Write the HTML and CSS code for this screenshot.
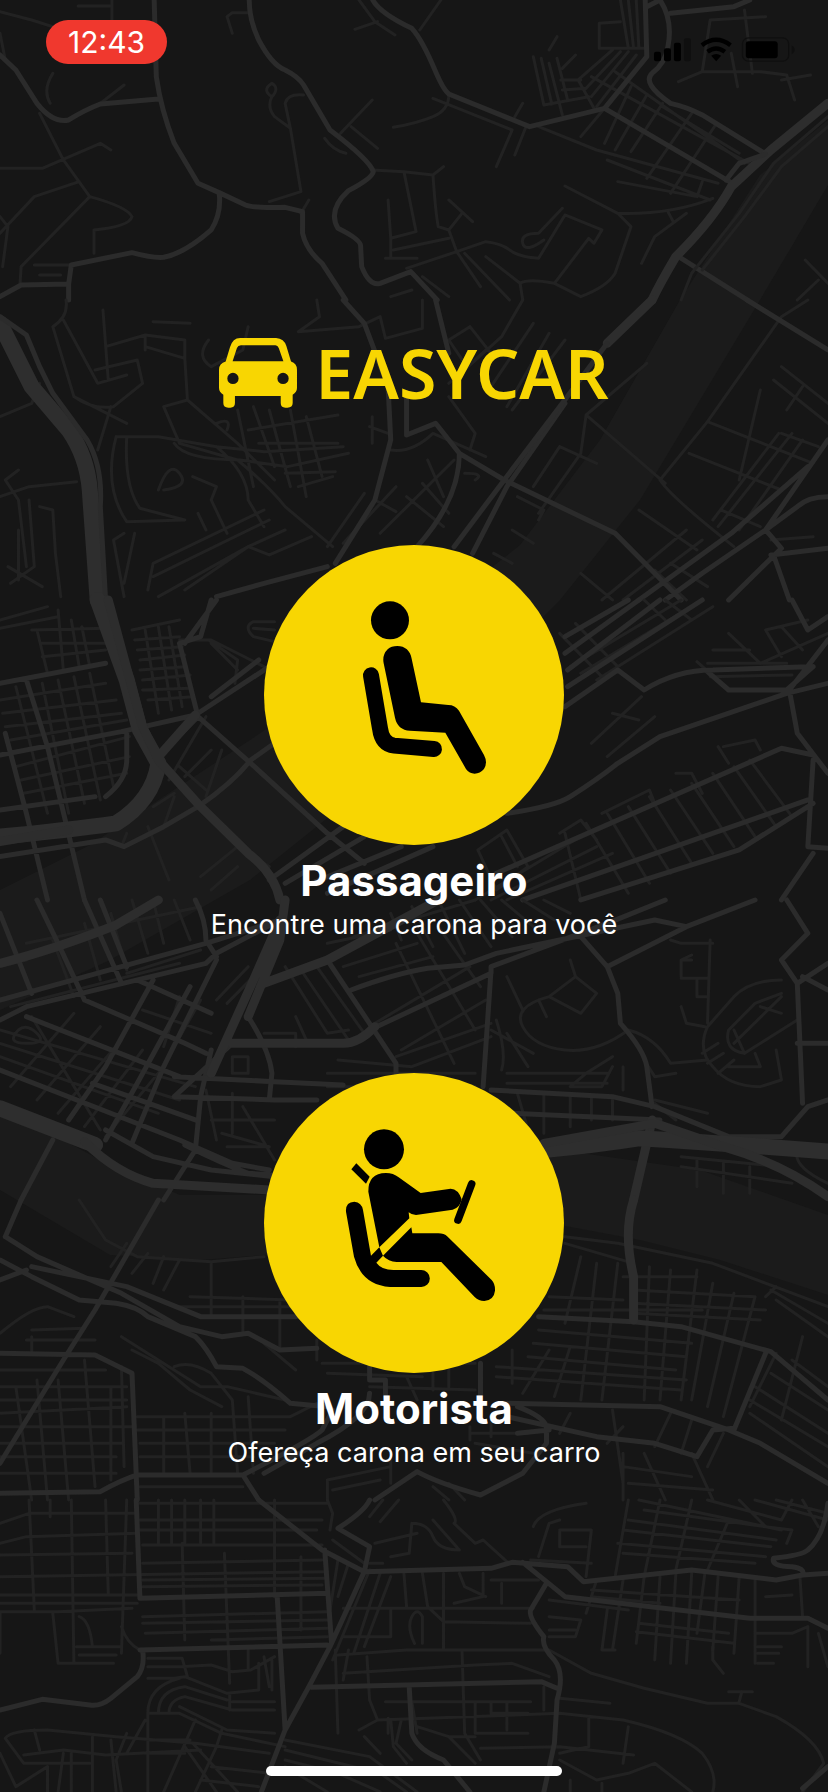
FILE: index.html
```html
<!DOCTYPE html>
<html lang="pt-BR">
<head>
<meta charset="utf-8">
<meta name="viewport" content="width=device-width, initial-scale=1">
<title>EasyCar</title>
<link rel="stylesheet" href="styles.css">
</head>
<body>
<div class="screen">
  <svg class="map" viewBox="0 0 828 1792" preserveAspectRatio="xMidYMid slice" aria-hidden="true">
    <!-- river -->
    <path class="water" d="M828 120V185L760 300 700 400 640 500 560 600 480 680 400 760 250 880 110 960 0 1010V890L90 845 250 740 400 640 520 545 600 440 680 300 760 175ZM0 1105L100 1160 180 1195 280 1195 420 1180 560 1150 700 1170 828 1215V1295L720 1260 640 1240 560 1225 460 1235 330 1250 200 1260 110 1255 0 1190Z"/>

    <!-- y 0 to 300 -->
    <g transform="scale(.528 .3333)">
      <path class="street" d="M212 0V60M148 18H210M440 100L430 50 440 38H470M0 35L60 60 110 85M0 100L10 180M100 220Q80 270 95 310M75 340L120 480 170 590 40 800 38 850M235 255L190 310M0 505H80L190 430 210 450M150 545L65 590 0 700M170 590Q240 620 250 650 245 680 178 690V760M0 650L15 680 5 800M65 795H135M75 825H115M550 385L520 350Q505 320 515 290 495 270 515 250 530 265 515 290M550 385L540 310Q545 280 575 285M550 385L570 575 510 605M585 600L570 640M705 300L645 400M665 380L715 445M615 415Q630 450 655 460M835 0L795 90M680 0L710 65 748 105M672 88L715 65M850 285Q850 330 820 350 790 370 745 382M820 295L970 390M970 390L940 500M995 385L975 465M990 310L975 350M705 510L765 515 820 525 840 500M765 515L788 695 740 715 735 600M820 525Q825 640 830 680L850 690 875 640M850 600L895 665M740 715V770M850 690L865 755 770 805M730 775H790M745 750L850 715M865 755L920 725Q950 730 965 750T1020 775L1070 645 1140 690 1125 730 1115 715 1050 850 1100 890Q1150 860 1165 820L1195 680 1170 640 1070 558M1170 640Q1270 645 1350 595M1065 625L1020 700Q985 700 990 730T1030 720M920 770L985 850 990 900M985 850Q1000 835 1050 850M880 760L965 900M865 755L910 860M800 830L850 890M740 890L780 870"/>
      <path class="street" d="M1010 170L1030 315M1025 175L1045 312M1040 190L1065 345M1055 175L1075 300M1055 110L1040 150M1030 315L1115 290M1065 270L1110 265M1062 240L1100 240M1090 165L1065 205M1175 0L1190 145M1190 0L1200 145M1205 0L1210 145M1175 65L1135 70V145H1225M1160 150L1095 240 1125 325M1175 155L1110 265M1190 155L1120 290M1205 165L1130 320M1120 230L1430 500M1165 215L1410 490M1255 320L1400 460M1100 410L1145 325M1145 430L1195 260M1165 450L1225 285M1195 455L1255 310M1225 535L1310 340M1270 580L1355 375M1020 380L1130 450 1360 550M1150 480L1345 600M1170 545L1320 590 1330 545M1345 60L1330 215 1285 245M1345 60L1450 50M1410 30L1425 220M1330 215H1440L1490 225 1505 300M1385 160L1397 260M1480 240L1535 225M1300 640L1240 710 1215 790M1265 635L1275 665M1525 780L1568 850M1550 840L1510 900"/>
      <path class="road" d="M292 0L296 230Q305 330 330 430L375 550 415 578 465 615Q480 625 540 622L573 635V700Q580 750 610 790L655 900M415 578Q420 640 400 690 350 760 310 772 290 775 250 758L135 795 130 852 40 855 0 890M130 852V900M472 0Q472 60 490 120 515 195 540 210 565 230 575 255L625 390Q700 480 707 515 705 535 660 572 620 630 640 685 685 720 683 740L685 800Q700 860 720 850L778 815 828 900M706 0Q720 40 780 85 800 120 825 215 840 270 850 282L1003 380 1145 325 1225 170 1222 0M1145 325L1385 548M1250 0Q1275 60 1265 140 1260 190 1235 220 1215 250 1270 310 1300 320 1330 345L1450 462M1225 20L1250 0M1270 40L1390 20 1420 0M0 165L30 210 70 310Q100 370 130 360 160 330 190 312L300 297M1280 765L1415 900"/>
      <path class="highway" d="M1568 310L1460 450 1385 560Q1350 660 1280 770 1250 850 1235 900"/>
      <path class="street" d="M1568 350L1465 490 1400 640 1310 820 1290 900M1568 380L1480 500 1410 650 1330 810"/>
      <path class="road" d="M1450 462L1400 490 1375 540"/>
    </g>

    <!-- y 300 to 600 -->
    <g transform="translate(0 300) scale(.528 .3333)">
      <path class="street" d="M125 0Q130 50 100 80L140 290M120 60L185 250 240 225M180 210L260 180 270 250 215 320Q175 330 140 290M195 30L205 240M200 140L275 105 350 120V175L275 140M275 105V150M290 65L360 70M350 175L355 300 310 320 340 430 450 480M355 300L450 430 520 540M210 320L185 450M140 290L240 370M220 410H300L410 440 500 455 650 440M240 410Q235 560 265 625L350 660M220 410Q195 560 240 665L350 660M330 430Q350 480 455 480L545 500 660 460M410 440Q470 520 470 600L500 680M450 480Q510 560 540 620L630 740M410 370Q440 350 430 390M450 330L480 560M480 320L520 500M510 330L550 560M550 330L580 590M580 350L610 530M470 390L640 345M490 430L640 430M540 520L635 515M565 560L630 530M300 570Q320 480 340 520T310 570M365 530L410 560 400 600 430 700M375 640L390 690M280 870L290 790 500 630M290 830L510 660M300 890L470 740M350 870L470 740 540 690M470 740L510 765 590 710M0 350L60 310 75 250M0 590L55 560 145 545M35 510L10 540 35 600 50 800M35 690V840M55 600L65 800 20 850M75 620L100 630 105 760 115 890M15 800L80 860M235 700L215 720 235 890M255 700L235 850M600 0L605 50 565 95 680 80 720 50 730 115 800 85V0M395 120Q370 170 400 200L460 150 470 80M890 80L850 120 880 190M890 80L930 160M990 0L950 110 880 210M850 250L920 150M1040 100L960 320M1010 70L930 260M1070 120L970 330M700 380L735 400M705 350V430M740 450Q780 460 820 400L920 470M850 290L900 400 890 450M810 480L840 590M860 480L720 700M880 520Q920 520 900 540M770 590L840 680M800 550L850 640M690 580L620 740M750 560L650 730M710 600L750 635"/>
      <path class="street" d="M1225 190L1110 345 1100 460 1020 640M1110 345L1260 550M1060 440L1130 490M1060 440L1010 560M980 590L1030 630 1020 660M970 690L1010 730M935 760L970 790M1340 365L1540 490M1305 460L1480 570M1250 540L1340 365 1480 50 1530 0M1250 540Q1270 590 1390 740M1210 630L1320 750M1480 200L1568 310M1465 240L1568 370M1520 260L1490 330M1440 270L1400 540M1475 400L1350 660M1500 400L1360 680M1520 420L1400 690M1480 400L1550 440M1365 630L1440 680M1100 820L1160 900M1140 900L1300 690M1180 900L1330 720M1240 810L1300 900M1270 790L1340 860M1460 720L1540 710"/>
      <path class="road" d="M650 0L690 70 735 260 740 420 710 600 635 790M825 0L850 160M770 290L770 405 825 370 870 460 955 540 1165 700 1290 900M870 460Q870 600 790 740M1070 310L960 560 895 760M410 890L500 850 620 800M1415 0L1568 150M1568 420L1450 690 1330 820 1260 900M1530 500L1385 700 1210 900M1568 590Q1530 590 1510 620L1450 690 1480 745 1380 900M1460 765L1568 745M1465 765L1495 900"/>
      <path class="highway" d="M1235 0L1150 130"/>
      <path class="road" d="M1150 130L1060 320 955 540 860 740"/>
      <path class="trunk" d="M0 70L60 260 130 390Q165 470 170 570L185 900"/>
      <path class="road" d="M0 50L50 105 75 200 100 280 165 420Q195 500 190 620L200 900"/>
    </g>

    <!-- y 600 to 900 -->
    <g transform="translate(0 600) scale(.528 .3333)">
      <path class="street" d="M0 60L90 20M0 85L110 50M60 90L200 85M80 130H200M80 170L200 150M110 30L120 210M135 60L150 200M155 80L170 200M70 90L90 220M250 90L340 60M255 120L340 110M260 150L345 140M265 180L350 165M265 210L350 200M270 240L360 225M270 270L360 265M280 300L365 290M275 90L300 340M300 80L325 330M320 80L345 320M0 300L200 250M5 340L220 300M10 380L230 340M20 420L240 360M30 500L245 410M40 540L245 470M45 580L240 520M80 250L130 640M110 240L160 610M140 230L190 600M170 220L215 560M30 260L90 640M340 120L400 120 500 200M395 120L450 180 445 250M400 130L450 210M520 65H480Q460 80 480 110L520 125M520 90L480 85M390 350L320 540M400 450L350 530M420 450L390 590M390 570L340 500M280 680L320 840M380 830L450 740 510 800M400 870L450 800M240 700L230 740M310 680L330 590M290 620L330 580M900 900L1110 700M930 900L1130 740M960 900L1160 760M1070 700L1100 900M1110 670L1190 880M1150 640L1230 850M1190 620L1270 820M1230 590L1310 790M1270 570L1350 760M1310 550L1390 740M1350 520L1430 710M1390 500L1470 680M1420 480L1500 650M1140 640L1230 570 1240 610M1060 700L1100 660 1130 720M905 750L960 690 1000 800 940 870ZM950 710L980 800M1280 520H1310L1330 580M1370 440L1430 420 1440 450M1360 440L1380 490M1215 290L1120 430M1240 350L1150 470M1160 340L1210 360M1380 100L1440 190M1350 150H1420M1450 90L1480 170M1450 90L1530 60M1480 80L1520 150M1440 190L1568 100M1320 185L1380 270M1340 190L1490 190M1345 230L1500 225M1320 10L1100 220M1290 0L1080 200M1350 20L1130 240M1060 100L1140 230M1090 70L1170 200M1220 0L1260 60M1260 0L1310 60"/>
      <path class="road" d="M0 250L200 190M0 465L230 395 370 345 510 200M0 770L200 720 235 740 310 680 375 620Q440 550 475 480L555 390M0 630L180 590M50 240L90 440 160 900M10 400L50 640 90 900M240 400V480Q240 540 200 590M400 0L380 110 340 130 375 350M410 0L350 130M375 350L475 490 620 700 690 790M375 350L300 470M490 180L400 290M1190 0L1070 110M1330 0L1075 260M1210 0L1070 160M1250 0L1075 210M1070 320L1170 210 1220 270Q1280 210 1350 210L1530 200M1340 215L1380 270H1490L1540 200M960 640Q1050 620 1080 590 1130 540 1170 490L1250 410 1490 280 1568 250M940 820L1480 445 1540 465M990 900L1530 600M1500 0L1530 90 1568 50M1568 120L1495 270 1510 400 1568 520M1540 480L1530 740 1568 745M1540 760L1480 900M1100 900L1400 750 1540 610M510 840L650 680M540 850L690 710M590 850L760 740M620 880L820 740"/>
      <path class="trunk" d="M185 0L240 240 265 390 300 490Q290 600 220 670 130 690 0 710"/>
      <path class="highway" d="M205 0L270 380 300 480 380 620 470 760Q520 820 530 900M300 470L370 345M0 725L130 690"/>
    </g>

    <!-- y 900 to 1200 -->
    <g transform="translate(0 900) scale(.528 .3333)">
      <path class="street" d="M100 120L140 290M160 70L190 240M210 40L240 210M250 0L280 160M290 0L310 130M330 0L360 120M50 130L380 20M0 200L50 180M20 320L340 190M240 220L380 150M0 390L370 560M0 430L340 600M0 470L300 640M60 350L190 690M20 560L140 340M70 600L190 380M110 640L230 420M160 680L270 450M200 710L310 500M270 330L400 400M340 290L310 440M380 300L330 440M35 390Q50 370 70 400T50 430 35 390M410 300L470 200M430 310L480 230M440 470H470V520H440ZM500 400H560V440M540 200L620 400 660 390M570 210L660 420M600 200L690 400M560 350L580 420M640 480L780 500M620 520H900M620 560H900M400 660H520M420 700L510 740M430 740H510M460 620L520 780M390 570L410 720M440 580V700M750 130L860 490M790 100L900 390M830 80L910 260M650 200L790 130M680 230L820 170M710 370L890 200M760 450L920 300M740 40L760 120M780 20L820 140M830 0L880 160M870 0L930 140M910 0L970 110M950 0L1010 80M990 0L1050 60M1030 0L1080 40M670 110L900 0M620 130L740 90M750 470L930 370M780 500L930 410M940 360Q960 460 950 510M930 390L1010 460M960 400L1000 500M1080 180L1090 230 1130 280 1100 340 1040 290 1090 230M960 230L990 330M1040 290Q970 320 990 380T1070 450 1190 390M1020 300L1035 350M1290 180H1310M1290 230V180L1310 165M1290 235H1340M1320 240V290H1340M1345 120L1340 370M1270 120L1290 130 1350 130M1290 320L1300 370 1335 380M1480 240Q1420 240 1390 290L1340 380Q1320 450 1350 500 1380 560 1440 560L1480 540 1470 450M1480 280L1430 310 1380 390Q1370 450 1410 460L1510 360M1480 290L1390 430M1440 320L1480 340M1390 390L1410 460M1330 460L1360 430M1340 490L1370 460M1360 520L1390 480M1430 460L1440 500 1380 500M1190 390Q1240 410 1270 490L1340 480M1220 480L1240 530 1280 520M960 520H1150M960 550H1150M1160 470L1110 520 1080 560H1140L1160 500M1180 500V570M980 580L1000 690M1030 580V700M1080 580V680M1120 590V660M1160 600V660M1240 600L1340 640M1240 610L1280 660M1290 770L1480 800M1290 800L1500 850M1320 780V860M1370 790V880M1420 800V880M1510 750Q1500 800 1568 850"/>
      <path class="road" d="M0 300L390 130 530 60M0 360L50 320 390 190 410 160 530 60M0 40L60 280M70 0L110 130 160 300M160 0L230 250M190 0L240 200M370 0Q390 60 390 120L410 170M260 240L400 340M160 300L350 430 390 460M50 350L340 530M0 510L340 720 440 790 510 810M175 550L370 660M290 240L200 500 130 660M360 260L260 550 200 720M410 180L310 500 250 730M470 350Q510 450 515 520L510 600M440 430L330 590M400 450L380 590 370 750 310 900M330 530L520 545 650 555M330 590L520 600 600 600M100 720L40 900M620 180L750 490V520M665 270Q750 220 810 205L880 195 940 160 1240 60 1300 80 1430 0M700 390L930 220V200L1150 70 1260 0M930 210L915 560M1150 200L1300 80M1100 110L1150 200 1170 280 1175 370Q1220 450 1225 500L1235 620M1490 0L1530 100 1480 180 1510 250 1520 610M1510 250L1568 190M1520 230L1568 270M1510 430L1568 430M930 570L1160 590 1240 620 1380 710H1480L1530 620 1568 600M970 640L1250 660M200 690L290 770 400 810 520 830M350 735Q420 790 470 820L520 825"/>
      <path class="highway" d="M0 190Q100 150 220 75L300 0M440 430H650Q680 430 710 380M530 60L480 240 400 520M540 0L530 120 470 350M500 250L620 180 830 0M1235 660L1200 900"/>
      <path class="trunk" d="M0 625L180 735M1030 750Q1130 735 1210 715 1370 730 1568 755"/>
      <path class="highway" d="M160 725Q220 820 290 850L510 870M1030 730L1240 670 1370 740Q1480 790 1568 890"/>
    </g>

    <!-- y 1200 to 1500 -->
    <g transform="translate(0 1200) scale(.528 .3333)">
      <path class="street" d="M0 400Q60 320 90 320L140 350M50 420H180M60 390L160 385M60 460V410M0 560H240M0 600H240M0 640L240 620M0 680H250M0 730H230M0 770H220M0 820H220M30 560L60 900M70 540L90 900M110 540L130 900M160 480L180 860M210 560V840M230 500L235 800M0 510H200M260 650H550L600 610M260 690H540M265 730H520M265 770H480M265 860H460M310 650V820M350 640L360 820M400 640V820M440 600L450 820M470 590L480 820M150 0L200 120 260 170 400 185 500 170M210 200L240 130M250 220L280 160M290 250L310 170M310 270L340 180M400 190V350M330 320H550M360 290L550 300M460 290V400M530 300V440M250 450L300 490 360 570 420 620M230 410L380 560 430 560 540 600M330 500Q360 480 400 520L440 600M500 430L560 510M600 420V480M610 490H900M620 520L800 530M700 560L900 570M770 530L790 600M820 520V570M850 500V560M940 500L1300 540M940 530L1290 570M1000 470L1280 510M1010 430L1300 470M1020 390L1310 430M1030 330L1330 330M1040 290L1180 300M1070 130L1200 190M1070 110L1170 130 1350 190 1568 320M1100 170L1070 370M1130 190L1100 600M1170 190L1140 600M1230 200L1220 600M1270 210L1250 600M1320 210L1290 600M1350 250L1310 600M1390 280L1340 620M1430 290L1370 650M1180 230H1320M1200 270L1430 290M1200 310L1450 330M1200 340L1440 360M1040 450L990 580M1080 440L1050 590M970 450V550M890 700H1000M900 730L1010 760M890 680V720M930 650V710M1080 640L1060 700M1160 630L1180 850M1180 680L1150 730M1270 640L1240 740M1310 660L1290 760M1370 700L1340 800M1460 270L1568 370M1470 300L1568 410M1450 290L1470 260M1500 480L1568 560M1460 520L1568 630M1430 560L1568 700M1420 600L1568 740M1420 640L1568 800M1470 460L1420 620M1520 410L1480 660M1180 800L1310 830M1190 850L1350 870M1180 900L1180 760M1220 760L1260 900M1310 760L1350 900M620 900V840L740 800M630 870L720 840M740 760V850M850 850L880 900M820 860L850 900"/>
      <path class="road" d="M0 180L60 230 150 300 220 310Q260 320 280 350L370 410Q390 440 410 500L460 505Q500 540 550 610L620 620M60 200L240 260 380 350H560M10 110L70 170 230 280 340 380 420 410 470 400 530 450 600 445M300 0L180 330 120 480 0 790M0 460L180 465 250 520 260 900M0 880L190 875Q230 840 260 825L460 825Q590 720 610 690L630 630M460 825L490 900M700 500V540H730V590M700 580Q700 650 600 730L500 820M0 240L50 210M910 490V600M960 610L1250 620 1380 690 1440 730 1568 850M980 620Q1030 650 1035 680V730L990 820 910 885Q830 850 790 815L710 900M960 650L1130 710 1240 730 1320 770 1350 690 1390 685M1020 350L1200 365 1290 380 1460 455 1568 600M1450 460L1390 690M40 0L10 110M980 700L1040 690"/>
      <path class="highway" d="M1200 0Q1180 100 1200 230V360"/>
    </g>

    <!-- y 1500 to 1792 -->
    <g transform="translate(0 1500) scale(.528 .3333)">
      <path class="street" d="M55 0L65 330M95 0V50M135 0L140 490M200 0L205 280M240 0L230 460M300 0V130M325 0V130M350 0V130M380 0V130M405 0V130M345 130L350 420M425 160L435 550M520 0V290M570 170V390M0 70L55 40 260 40M0 130L50 110 260 100M0 165L250 160M0 230L620 215M0 285H260M0 310H260M0 335H110L250 325M265 10H620M265 60H610M265 90H600M270 135H610M270 190L610 180M270 240L620 235M270 260L610 255M270 350L620 335M275 400L620 385M270 370L620 360M400 420L620 410M0 340V460M100 340L110 490H215M150 350Q170 360 175 440M145 440H230M150 465H220M230 380Q240 430 265 450M280 475H345L355 530M280 500H340L400 495 440 515 475 510 520 470M280 535H330L350 530 430 580 490 570V490M280 640Q280 560 340 535M300 640Q300 570 350 560L430 600M320 640Q320 600 350 590L440 630H520M340 620L430 690 520 700M440 605H520M280 640L340 640 420 700 540 740M435 580V630M470 450V510M500 470L510 560M515 480V570M10 715Q20 690 90 690L220 710 370 730 510 760M10 715L45 790H170M45 765L120 750 200 765 380 750M65 690L75 750M0 760L30 860 90 800V876M120 760L110 876M135 760V876M175 710V876M210 720L220 876M240 700L220 780 230 876M275 660L240 760M280 640V876M280 720H360M280 760H350M370 660L310 876M350 740L410 876M365 730L450 876M420 690L410 740 370 876M400 800L510 820M380 840L490 860M540 720L700 770 790 876M540 750L720 820 770 876M540 780L640 820 720 876M540 800L620 876M690 710L720 760M740 660L745 740 770 790M760 660L750 730 780 780M620 0L630 40 625 90M700 50L725 0M720 65L755 0M630 120L690 190M700 190H725M840 0Q870 60 860 70L900 130 915 120 960 185M780 70Q810 70 820 110T870 150L820 60M780 70L775 160 740 170M710 130L790 100M700 210L630 480M720 220L670 460M740 230L690 440M640 180L625 330M660 190L640 290M765 220L770 320M800 220L810 320 840 365 1005 370M840 220V450M870 220L880 260 920 290M915 220V290L860 310M930 240H1020M950 250V310M650 325H1010M740 330L740 410H650M785 430Q770 380 780 350T800 350V430M635 450L640 700M640 465L770 450 1040 450M650 520L900 495 970 490 1040 530M660 450L650 540M695 470L700 600 715 660 1060 640 1180 660Q1290 700 1330 760 1360 820 1350 876M875 450L880 700M680 690L715 660M730 605H1005M735 655V700M780 605L790 700M900 605V700H1000M930 610V640H1000M960 610V690M1030 560V630M790 680L850 710H900M850 710L900 790M880 700L910 780M1060 595L1155 610M1115 650V740L1060 760M1190 680L1180 790M910 745L1060 740 1200 765M1060 780L1130 840 1190 820 1240 790 1310 876M1140 850V876M1080 840V876M1040 450L1120 520 1220 565 1340 610H1400L1470 650Q1550 720 1560 790L1520 876M1380 575H1425M1405 575L1400 605M1350 440V480L1370 520M1010 80Q1020 30 1110 10M1020 170L1040 70 1060 60M1060 90L1120 90 1110 230M1060 95V140H1110M1005 180L1120 190"/>
      <path class="street" d="M1190 0L1165 230M1250 0L1220 230M1310 0L1280 210M1380 60L1340 210M1190 60L1470 120M1180 90L1460 140M1170 130L1450 170M1210 0L1480 90M1220 30L1450 80M1180 160L1430 190M1340 0L1480 60M1400 0L1450 80 1500 90 1490 130M1500 0L1480 60M1430 0L1568 60M1470 0L1568 40M1520 0L1550 80M1040 300L1190 330M1040 350L1100 360 1090 410H1040M1040 390H1090M1130 240L1110 340M1180 240L1160 450M1150 330L1140 450 1165 450M1220 230L1205 430M1250 230L1240 480M1280 220L1270 490M1310 220L1300 490M1335 220L1320 400M1360 230L1350 450M1400 230L1390 460M1430 240V490M1120 270L1400 300M1120 290L1250 310M1205 395L1390 430M1210 370L1380 400M1430 400H1500L1530 380M1435 440H1480M1435 460H1475M1435 490H1465M1450 290L1500 285M1515 230L1520 350M1530 380V500M1550 400L1568 500"/>
      <path class="road" d="M258 0L265 295 620 280M265 450L620 435M525 290L540 690 495 876M615 150L628 430M490 0L610 150 690 215 700 140 640 85Q690 35 700 0M690 215L625 440 585 560 540 690M690 215L930 205 970 187 1075 200 1105 245 1310 210 1470 240 1520 225 1568 220M990 187L1035 245 1070 290 1420 355H1530L1568 385M1035 250L1005 330Q1000 350 1030 410 1025 440 1050 480 1070 520 1055 600L1050 730 1030 876M590 562L1025 545 1055 565M775 560L780 700Q790 750 840 780L890 876M270 450Q275 500 260 530L210 595Q190 620 170 615L80 598 0 630M1568 10Q1560 110 1530 150 1520 165 1465 175 1460 200 1500 200 1525 205 1520 225M1520 865L1568 800"/>
    </g>
  </svg>

  <header class="status-bar">
    <time class="clock" datetime="12:43">12:43</time>
    <svg class="status-icons" viewBox="66 48 430 80" role="img" aria-label="Sinal, Wi-Fi e bateria">
      <rect x="69" y="95" width="21" height="28" rx="6"/>
      <rect x="99" y="84" width="21" height="39" rx="6"/>
      <rect x="129" y="68" width="21" height="55" rx="6"/>
      <rect class="faint" x="159" y="54" width="21" height="69" rx="6"/>
      <path class="arc" d="M213 75Q256 42 299 75M230 95Q256 75 282 95"/>
      <path d="M241 107Q256 96 271 107L256 123Z"/>
      <rect class="battery-frame" x="335" y="53" width="139" height="70" rx="18"/>
      <rect x="345" y="63" width="96" height="51" rx="9"/>
      <path class="faint" d="M483 76Q492 80 492 89T483 102Z"/>
    </svg>
  </header>

  <main class="content">
    <h1 class="brand">
      <svg class="car" viewBox="64 54 235 211" aria-hidden="true">
        <path fill-rule="evenodd" d="M128 54H236Q260 56 267 78L281 125Q299 130 299 150V205Q299 218 286 225V250Q286 264 270 264H264Q250 264 250 250V229H112V250Q112 264 98 264H92Q77 264 77 250V225Q64 218 64 205V150Q64 130 84 125L97 82Q105 54 128 54ZM130 76Q121 76 118 84L105 124H258L244 84Q241 76 234 76ZM89 176a17 17 0 1 0 34 0a17 17 0 1 0-34 0ZM240 176a17 17 0 1 0 34 0a17 17 0 1 0-34 0Z"/>
      </svg>
      <span>EASYCAR</span>
    </h1>

    <div class="options">
      <button class="option" type="button">
        <svg class="badge" viewBox="0 0 300 300" aria-hidden="true">
          <circle class="disc" cx="150" cy="150" r="150"/>
          <g transform="translate(66 35) scale(.3333)">
            <circle cx="180" cy="121" r="57"/>
            <path d="M202 198C225 198 241 212 245 236L273 367 355 375Q375 375 387 392L462 525Q474 548 462 567 450 581 434 581 418 581 408 567L346 458 240 452Q203 450 195 413L161 250Q156 225 173 208 184 198 202 198Z"/>
            <path class="seat" d="M123 286L150 445Q156 493 193 497L312 507"/>
          </g>
        </svg>
        <span class="option-title">Passageiro</span>
        <span class="option-text">Encontre uma carona para você</span>
      </button>

      <button class="option" type="button">
        <svg class="badge" viewBox="0 0 300 300" aria-hidden="true">
          <circle class="disc" cx="150" cy="150" r="150"/>
          <g transform="translate(66 37) scale(.3333)">
            <circle cx="162" cy="118" r="60"/>
            <path d="M79 160L119 200 108 221 64 178Z"/>
            <path d="M115 245Q114 190 168 189 190 189 206 202L272 249 362 236Q385 237 395 268 390 294 368 299L258 315Q245 315 236 307L238 325 148 412Z"/>
            <path d="M244 352L247 370H325Q342 370 353 380L485 510Q496 522 495 542 492 570 463 573 446 573 434 561L334 456H200Q175 455 159 437Z"/>
            <path d="M148 412L159 437 139 458Q155 480 190 480H274A25 25 0 0 1 274 531H180Q95 525 72 440L48 305Q46 276 73 275 95 277 99 300L123 437Z"/>
            <path class="wheel" d="M425 222L384 330"/>
          </g>
        </svg>
        <span class="option-title">Motorista</span>
        <span class="option-text">Ofereça carona em seu carro</span>
      </button>
    </div>
  </main>

  <div class="home-indicator"></div>
</div>
</body>
</html>
```
FILE: styles.css
```css
* {
  box-sizing: border-box;
}

body {
  margin: 0;
  background: #161616;
  color: #fff;
  font-family: Inter, "Liberation Sans", sans-serif;
}

.screen {
  position: relative;
  display: flex;
  flex-direction: column;
  min-height: 100vh;
  overflow: hidden;
}

.map {
  position: absolute;
  inset: 0;
  width: 100%;
  height: 100%;
  fill: none;
  stroke-linejoin: round;
  stroke-linecap: round;
}

.map path {
  vector-effect: non-scaling-stroke;
}

.map .water {
  fill: #1b1b1b;
}

.street {
  stroke: #222;
  stroke-width: 3px;
}

.road {
  stroke: #2b2b2b;
  stroke-width: 5px;
}

.highway {
  stroke: #2d2d2d;
  stroke-width: 9px;
}

.trunk {
  stroke: #2e2e2e;
  stroke-width: 16px;
}

.status-bar,
.content,
.home-indicator {
  position: relative;
}

.status-bar {
  display: flex;
  justify-content: space-between;
  align-items: flex-start;
  padding: 20px 32px 0 46px;
}

.clock {
  padding: 0 22px;
  border-radius: 22px;
  background: #f0382e;
  font-size: 30px;
  line-height: 44px;
}

.status-icons {
  width: 143px;
  height: 27px;
  margin-top: 16px;
}

.faint {
  fill: #0f0f0f;
}

.arc {
  fill: none;
  stroke: #000;
  stroke-width: 13px;
}

.battery-frame {
  fill: none;
  stroke: #0f0f0f;
  stroke-width: 4px;
}

.content {
  display: flex;
  flex-direction: column;
  align-items: center;
  padding-top: 274px;
}

.brand {
  display: flex;
  align-items: center;
  gap: 18px;
  margin: 0;
  color: #f8d602;
  font-family: "Noto Sans", sans-serif;
  font-size: 68px;
  font-weight: 600;
  line-height: 70px;
}

.car {
  width: 78px;
  height: 70px;
  fill: currentColor;
}

.options {
  display: flex;
  flex-direction: column;
  align-items: center;
  gap: 130px;
  margin-top: 137px;
}

.option {
  display: flex;
  flex-direction: column;
  align-items: center;
  padding: 0;
  border: 0;
  background: none;
  color: inherit;
  font-family: inherit;
  cursor: pointer;
}

.badge {
  width: 300px;
  height: 300px;
}

.disc {
  fill: #f8d602;
}

.seat {
  fill: none;
  stroke: #000;
  stroke-width: 48px;
  stroke-linecap: round;
}

.wheel {
  stroke: #000;
  stroke-width: 23px;
  stroke-linecap: round;
}

.option-title {
  margin-top: 10px;
  font-size: 42px;
  font-weight: 700;
  line-height: 52px;
}

.option-text {
  font-size: 27px;
  line-height: 36px;
}

.home-indicator {
  width: 296px;
  height: 10px;
  margin: auto auto 16px;
  border-radius: 5px;
  background: #fff;
}
```
